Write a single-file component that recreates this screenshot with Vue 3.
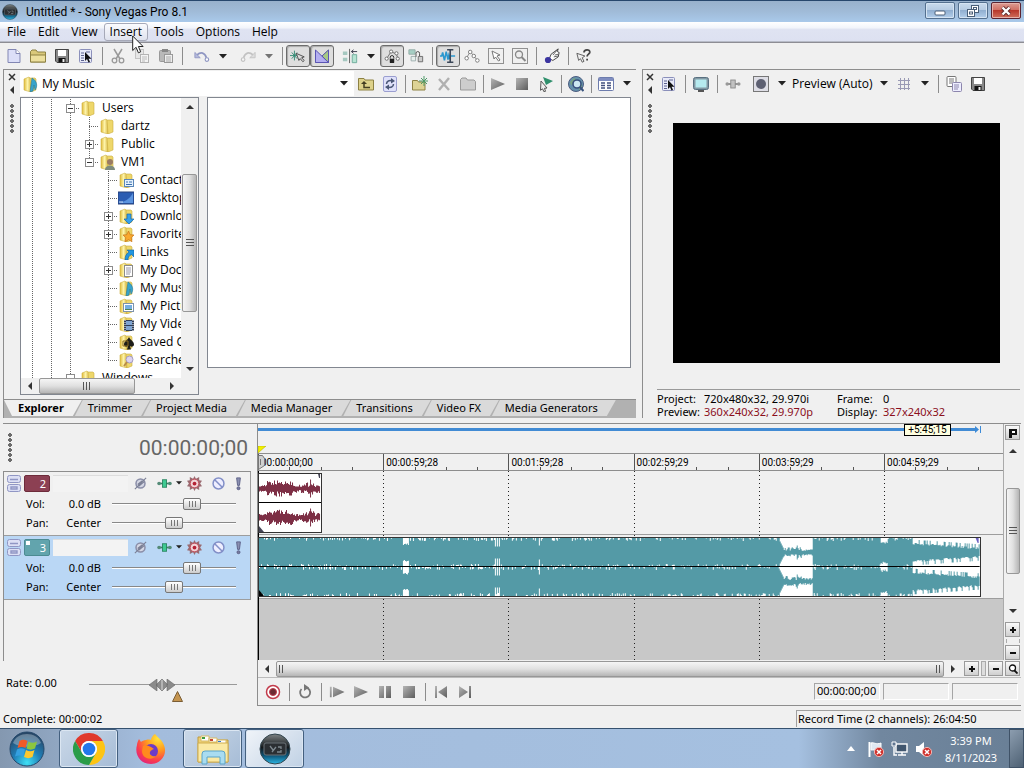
<template>
  <svg class="sprite" aria-hidden="true">
    <defs>
      <linearGradient id="gGrey" x1="0" y1="0" x2="1" y2="1">
        <stop offset="0" stop-color="#b5b5b5" /><stop offset="1" stop-color="#5d5d5d" />
      </linearGradient>
      <linearGradient id="gFolder" x1="0" x2="1">
        <stop offset="0" stop-color="#e0bb3c" /><stop offset=".5" stop-color="#fdf3a8" /><stop offset="1" stop-color="#dcbd4a" />
      </linearGradient>
      <radialGradient id="gOrb" cx=".5" cy=".9" r=".9">
        <stop offset="0" stop-color="#3fe0f5" /><stop offset=".45" stop-color="#1f7fb8" /><stop offset="1" stop-color="#29425f" />
      </radialGradient>
      <radialGradient id="gFox" cx=".75" cy=".15" r="1">
        <stop offset="0" stop-color="#ffe53c" /><stop offset=".4" stop-color="#ff9a1f" /><stop offset=".75" stop-color="#fb3b4e" /><stop offset="1" stop-color="#d8208a" />
      </radialGradient>
      <linearGradient id="gVegas" x1="0" y1="0" x2="0" y2="1">
        <stop offset="0" stop-color="#7d8385" /><stop offset=".45" stop-color="#15191c" /><stop offset=".7" stop-color="#0b4d6e" /><stop offset="1" stop-color="#2cb8e8" />
      </linearGradient>
    </defs>
    <symbol id="new" viewBox="0 0 16 16"><path d="M2 1.500h8l4 4v9H2z" fill="#dcdff8" stroke="#8287b3" /><path d="M10 1.500v4h4" fill="#fff" stroke="#8287b3" /></symbol>
    <symbol id="open" viewBox="0 0 16 16"><path d="M.5 14V3.500L2 2h4l1.500 2h8v10z" fill="#d9c87a" stroke="#8d8143" /><path d="M.5 14V7h15v7z" fill="#ecdf9d" stroke="#8d8143" /></symbol>
    <symbol id="save" viewBox="0 0 16 16"><path d="M1.500 1.500h13v13H3l-1.500-1.500z" fill="#888" stroke="#444" /><path d="M4 2h8v6H4z" fill="#fff" /><path d="M4.500 10h7v4.500h-7z" fill="#111" /><path d="M8.500 11h2v3h-2z" fill="#eee" /></symbol>
    <symbol id="props" viewBox="0 0 16 16"><rect x="1.500" y="1.500" width="12" height="13" rx="1" fill="#e8eaf8" stroke="#8b90bb" /><path d="M3 5h3M3 7.500h3M3 10h3M3 12.500h3M8 4h4" stroke="#5d638f" /><path d="M7 4v9l2-2 1.500 3.500 1.500-.8-1.500-3h3z" fill="#111" /></symbol>
    <symbol id="cut" viewBox="0 0 16 16"><path d="M4 1l6 10M12 1L6 11" stroke="#999" stroke-width="1.500" fill="none" /><circle cx="4.500" cy="12.500" r="2.300" fill="none" stroke="#999" stroke-width="1.300" /><circle cx="11.500" cy="12.500" r="2.300" fill="none" stroke="#999" stroke-width="1.300" /></symbol>
    <symbol id="copyoff" viewBox="0 0 16 16"><rect x="1.500" y="1.500" width="8" height="9" fill="#e6e6e6" stroke="#c3c3c3" /><rect x="6.500" y="6.500" width="8" height="8" fill="#f3f3f3" stroke="#b3b3b3" /><path d="M8 9h5M8 11h5M8 13h3" stroke="#bbb" /></symbol>
    <symbol id="paste" viewBox="0 0 16 16"><rect x="1.500" y="2.500" width="11" height="11" rx="1" fill="#b9b9b9" stroke="#999" /><rect x="4" y="1" width="6" height="3" fill="#888" /><rect x="6.500" y="6.500" width="8" height="8" fill="#eee" stroke="#999" /><path d="M8 9h5M8 11h5M8 13h5" stroke="#aaa" /></symbol>
    <symbol id="undo" viewBox="0 0 18 16"><path d="M3 7c5-4 9-3 11 3" fill="none" stroke="#8f96c2" stroke-width="2" /><path d="M1 4v6h6z" fill="#b4b9dc" stroke="#8f96c2" /><circle cx="14.500" cy="12" r="2" fill="#fff" stroke="#8f96c2" stroke-width="1.300" /></symbol>
    <symbol id="redo" viewBox="0 0 18 16"><path d="M15 7c-5-4-9-3-11 3" fill="none" stroke="#c2c2c2" stroke-width="2" /><path d="M17 4v6h-6z" fill="#ddd" stroke="#c2c2c2" /><circle cx="3.500" cy="12" r="2" fill="#f5f5f5" stroke="#c2c2c2" stroke-width="1.300" /></symbol>
    <symbol id="snapping" viewBox="0 0 18 16"><path d="M5 2v11M0 7.500h10M2 4l6 7M8 4l-6 7" stroke="#2f8a72" /><path d="M7 5l9 4-3 1 3 3-1.500 1.500-3-3.500-1.500 2z" fill="#ddd" stroke="#444" /></symbol>
    <symbol id="fade" viewBox="0 0 16 16"><path d="M14.500 2v12.500H1.500z" fill="#b9d77e" stroke="#6d9050" /><path d="M1.500 2v12.500h13z" fill="#b3aef0" stroke="#5b55b5" /><path d="M14.500 2v12.500L8 8z" fill="#a6c985" stroke="#5b55b5" /></symbol>
    <symbol id="ripple" viewBox="0 0 18 16"><path d="M1 3h5v4H1zM1 10h5v4H1z" fill="#a5c8c0" /><path d="M11.500 6.500h5v9h-5z" fill="#b5e3d2" stroke="#6aa898" /><path d="M8.500 0v16" stroke="#555" /><path d="M17 3H11M13 1l-2.500 2L13 5" fill="none" stroke="#334" /></symbol>
    <symbol id="lockenv" viewBox="0 0 18 16"><path d="M3 11l5-8 6 3 2 6" fill="none" stroke="#666" /><g fill="#fff" stroke="#666"><circle cx="3" cy="11" r="1.800" /><circle cx="8" cy="3" r="1.800" /><circle cx="14" cy="5" r="1.800" /><circle cx="15.500" cy="11" r="1.800" /></g><rect x="6.500" y="11" width="5" height="5" rx="1" fill="#222" /><path d="M7 11V9.500a2 2 0 014 0V11" fill="none" stroke="#222" /></symbol>
    <symbol id="group" viewBox="0 0 18 16"><path d="M1 1h7v5H1z" fill="#a6cfc4" stroke="#91aaa5" /><path d="M3.500 8.500h5v5h-5z" fill="#e6eeec" stroke="#9aa" /><path d="M11.500 8.500h5v6h-5z" fill="#ccc" stroke="#666" /><path d="M9 9V5a2 2 0 014 0v3" fill="none" stroke="#444" /></symbol>
    <symbol id="normal" viewBox="0 0 18 16"><path d="M0 8h2l1-4 2 9 2-10 2 9 1-5 1 3 1-2h5" fill="none" stroke="#2b98cf" stroke-width="1.800" /><path d="M8 1h7M8 15h7M11.500 1v14" stroke="#3a4658" stroke-width="1.800" /></symbol>
    <symbol id="envelope" viewBox="0 0 18 16"><path d="M3 10l4-7 4 5 4 5" fill="none" stroke="#888" /><g fill="#fff" stroke="#777"><circle cx="3" cy="10.500" r="2" /><circle cx="7" cy="3.500" r="2" /><circle cx="11" cy="8" r="2" /><circle cx="15" cy="13" r="2" /></g></symbol>
    <symbol id="select" viewBox="0 0 16 16"><rect x=".5" y=".5" width="15" height="15" fill="none" stroke="#333" stroke-dasharray="1 1" /><path d="M4 3l8 4-3 1 3 4-1.500 1-3-4-1.500 2z" fill="#fff" stroke="#777" /></symbol>
    <symbol id="zoomsel" viewBox="0 0 16 16"><rect x=".5" y=".5" width="15" height="15" fill="none" stroke="#333" stroke-dasharray="1 1" /><circle cx="7" cy="6.500" r="3.500" fill="#eee" stroke="#888" stroke-width="1.300" /><path d="M9.500 9l4 4" stroke="#888" stroke-width="2" /></symbol>
    <symbol id="hand" viewBox="0 0 18 18"><path d="M16 1l-8 6-2 5 4 2 6-4 1-5-2-1z" fill="#fff" stroke="#333" /><path d="M15 2l-5 6M12 8l4-1M11 10l5-1" stroke="#555" fill="none" /><circle cx="4.500" cy="13.500" r="3.500" fill="#3b35a0" /></symbol>
    <symbol id="whats" viewBox="0 0 18 16"><path d="M1 5l9 3-3 2 2 4-2 1-2-4-2 2z" fill="#eee" stroke="#555" /><path d="M9 4c0-4 7-4 6.500 0-.3 2-3 2-3 4.500M12.500 11v2" fill="none" stroke="#444" stroke-width="2" /></symbol>
    <symbol id="up" viewBox="0 0 16 16"><path d="M.5 14V2.500H6L7 4h8.500v10z" fill="#ddd18a" stroke="#8d8143" /><path d="M12 11.500H6V7" fill="none" stroke="#443e22" stroke-width="1.500" /><path d="M3 8l3-3L9 8z" fill="#443e22" /></symbol>
    <symbol id="refresh" viewBox="0 0 16 16"><rect x="1.500" y=".5" width="13" height="15" rx="1.500" fill="#dfe1fa" stroke="#9a9ed0" /><path d="M4.500 8c0-3 3-4 5.500-3M11.500 8c0 3-3 4-5.500 3" fill="none" stroke="#4b5877" stroke-width="1.500" /><path d="M9 2l4 3-4 2.500zM7 8.500L3 11l4 3z" fill="#4b5877" /></symbol>
    <symbol id="newfolder" viewBox="0 0 16 16"><path d="M.5 14V4.500h5l1 1.500H13v8z" fill="#ddd395" stroke="#8d8143" /><path d="M12 0v10M7 5h9M9 2l6 6M15 2L9 8" stroke="#4f9a68" /></symbol>
    <symbol id="delete" viewBox="0 0 16 16"><path d="M3 3l10 11M13 2L3 14" stroke="#b0b0b0" stroke-width="2.400" /></symbol>
    <symbol id="folderoff" viewBox="0 0 16 16"><path d="M.5 14V3.500L2 2h4l1.500 2H14l1.500 1.500V14z" fill="#cdcdcd" stroke="#999" /></symbol>
    <symbol id="play" viewBox="0 0 16 16"><path d="M1 2l14 6-14 6z" fill="url(#gGrey)" /></symbol>
    <symbol id="stop" viewBox="0 0 16 16"><path d="M2 2h12v12H2z" fill="url(#gGrey)" /></symbol>
    <symbol id="autoplay" viewBox="0 0 16 16"><path d="M5 1l10 4-7 4z" fill="#2f8f6c" /><path d="M3 5l6 7-2.500.3 1 3-1.500.5-1.500-3-2 1.500z" fill="#eee" stroke="#555" /></symbol>
    <symbol id="globe" viewBox="0 0 16 16"><circle cx="8" cy="8" r="7.500" fill="#6592ab" stroke="#4c5c80" /><path d="M2 6l4-4 3 2-3 4-3 1zM11 10l3-2v4l-3 2z" fill="#79a383" /><circle cx="9" cy="8" r="4" fill="#cbe8f1" stroke="#38527d" stroke-width="1.600" /><path d="M12 11l3.500 4" stroke="#38527d" stroke-width="2.200" /></symbol>
    <symbol id="views" viewBox="0 0 16 16"><rect x=".5" y="1.500" width="15" height="13" rx="1" fill="#fff" stroke="#6d7cad" /><path d="M1 2h14v3H1z" fill="#7f8dc0" /><path d="M3 7h4M3 9.500h4M3 12h4M9 7h4M9 9.500h4M9 12h4" stroke="#44517f" stroke-width="1.300" /></symbol>
    <symbol id="monitor" viewBox="0 0 16 16"><rect x=".5" y="1.500" width="15" height="12" rx="2" fill="#8399a5" stroke="#587080" /><rect x="2.500" y="3.500" width="11" height="8" fill="#b5ebf0" /><path d="M5 15h6" stroke="#555" stroke-width="2" /></symbol>
    <symbol id="fxoff" viewBox="0 0 18 16"><path d="M2 8h14" stroke="#888" stroke-width="2" /><circle cx="2.500" cy="8" r="2" fill="#999" /><circle cx="15.500" cy="8" r="2" fill="#999" /><rect x="6.500" y="3.500" width="5" height="9" fill="#c2c2c2" stroke="#888" /></symbol>
    <symbol id="fx" viewBox="0 0 18 16"><path d="M2 8h14" stroke="#3d8167" stroke-width="2" /><circle cx="2.500" cy="8" r="2.200" fill="#548b77" /><circle cx="15.500" cy="8" r="2.200" fill="#548b77" /><rect x="6.500" y="3.500" width="5" height="9" fill="#3fca92" stroke="#26805b" /></symbol>
    <symbol id="split" viewBox="0 0 16 16"><rect x=".5" y=".5" width="15" height="15" fill="#dedee6" stroke="#777" /><circle cx="8" cy="8" r="5" fill="#5d6072" /></symbol>
    <symbol id="grid" viewBox="0 0 16 16"><path d="M4.500 2v12M8.500 2v12M12.500 2v12M2 4.500h12M2 8.500h12M2 12.500h12" stroke="#9a9ab5" /></symbol>
    <symbol id="copy" viewBox="0 0 16 16"><rect x="1" y=".5" width="9" height="10" rx="1" fill="#fff" stroke="#777" /><path d="M3 3h5M3 5h5M3 7h4" stroke="#777" /><rect x="6.500" y="6.500" width="9" height="9" rx="1" fill="#eef" stroke="#8d86ad" /><path d="M8 9h5M8 11h5M8 13h4" stroke="#8d86ad" /></symbol>
    <symbol id="caret" viewBox="0 0 8 5"><path d="M0 0h8L4 4.500z" fill="#222" /></symbol>
    <symbol id="phase" viewBox="0 0 16 16"><circle cx="8" cy="8" r="4.800" fill="#d5d7e4" stroke="#8a8ea8" stroke-width="1.600" /><path d="M2 14L14 2M5 9l5-4M6 11l6-5" stroke="#7c8096" stroke-width="1.200" /></symbol>
    <symbol id="gear" viewBox="0 0 16 16"><path d="M8 0l1.500 3L13 1v3.500l3 .5-2 3 2 3-3 .5V15l-3.500-2L8 16l-1.500-3L3 15v-3.500L0 11l2-3-2-3 3-.5V1l3.500 2z" fill="#9a6a70" /><circle cx="8" cy="8" r="4.600" fill="#f1d5d8" stroke="#c24a58" /><circle cx="8" cy="8" r="2" fill="#b52234" /></symbol>
    <symbol id="mute" viewBox="0 0 16 16"><circle cx="8" cy="8" r="5.800" fill="#eef" stroke="#8390c8" stroke-width="1.600" /><path d="M4 4l8 8" stroke="#8390c8" stroke-width="1.600" /></symbol>
    <symbol id="solo" viewBox="0 0 8 16"><path d="M2 2h4L5 10H3z" fill="#8a8fb0" stroke="#5c6088" /><circle cx="4" cy="13" r="1.600" fill="#777ca0" stroke="#5c6088" /></symbol>
    <symbol id="strip" viewBox="0 0 14 17"><g fill="#dcdff4" stroke="#9096c4"><rect x=".5" y=".5" width="13" height="7" rx="2" /><rect x=".5" y="9.500" width="13" height="7" rx="2" /></g><path d="M3 4.500h8M4 12h6v2H4z" fill="none" stroke="#9096c4" stroke-width="1.400" /></symbol>
    <symbol id="record" viewBox="0 0 16 16"><circle cx="8" cy="8" r="6.500" fill="#fff" stroke="#c23b4b" stroke-width="1.500" /><circle cx="8" cy="8" r="3.500" fill="#6d2b33" stroke="#c23b4b" /></symbol>
    <symbol id="loop" viewBox="0 0 16 16"><path d="M9 3.500A5 5 0 1 1 4.500 5" fill="none" stroke="#777" stroke-width="1.800" /><path d="M7 0l5 3.500L7 7z" fill="#777" /></symbol>
    <symbol id="playstart" viewBox="0 0 18 16"><path d="M1 2h2v12H1zM4.500 2l13 6-13 6z" fill="url(#gGrey)" /></symbol>
    <symbol id="pause" viewBox="0 0 16 16"><path d="M2 2h5v12H2zM9 2h5v12H9z" fill="url(#gGrey)" /></symbol>
    <symbol id="prev" viewBox="0 0 16 16"><path d="M2 2h2v12H2zM14 2v12L5 8z" fill="url(#gGrey)" /></symbol>
    <symbol id="next" viewBox="0 0 16 16"><path d="M12 2h2v12h-2zM2 2v12l9-6z" fill="url(#gGrey)" /></symbol>
    <symbol id="folder" viewBox="0 0 16 16"><path d="M2 3l5-2 2 2v13l-7-2z" fill="url(#gFolder)" stroke="#cdb040" stroke-width=".6" /><path d="M8 2h5l1 1v11l-5 2z" fill="#eed76a" stroke="#c9ac42" stroke-width=".6" /></symbol>
    <symbol id="b-user" viewBox="0 0 16 16"><circle cx="11" cy="8" r="3" fill="#9a7b64" /><path d="M6 16c0-6 10-6 10 0z" fill="#7d8b7e" /></symbol>
    <symbol id="b-card" viewBox="0 0 16 16"><rect x="6.500" y="7.500" width="9" height="7" fill="#e5f1fc" stroke="#5b87b8" /><path d="M8 10h2M11 10h3M8 12.500h6" stroke="#3a70b0" /></symbol>
    <symbol id="b-down" viewBox="0 0 16 16"><path d="M9 6h4v5h3l-5 5-5-5h3z" fill="#37a0e8" stroke="#1769ac" stroke-width=".7" /></symbol>
    <symbol id="b-star" viewBox="0 0 16 16"><path d="M10.500 5l1.700 3.700 3.800.3-2.800 2.700.8 4-3.500-2-3.500 2 .8-4L5 9l3.800-.3z" fill="#f9a92e" stroke="#c9721a" stroke-width=".7" /></symbol>
    <symbol id="b-link" viewBox="0 0 16 16"><path d="M16 6v7l-2.500-2.500C11 12 10 13 10 16H7c0-4 1-6 4-8L9 6z" fill="#2196e0" stroke="#125e9c" stroke-width=".6" /></symbol>
    <symbol id="b-doc" viewBox="0 0 16 16"><rect x="6.500" y="3.500" width="8" height="11" fill="#fff" stroke="#8b8b8b" /><path d="M8 6h5M8 8h5M8 10h5M8 12h4" stroke="#99a" /></symbol>
    <symbol id="b-music" viewBox="0 0 16 16"><path d="M10 2c5 3 6 8 3 12l-1-5-1 6-3 1z" fill="#37a3cb" stroke="#23799b" stroke-width=".6" /></symbol>
    <symbol id="b-pic" viewBox="0 0 16 16"><rect x="5.500" y="5.500" width="10" height="8" fill="#fff" stroke="#7e93aa" /><path d="M7 7h7v5H7z" fill="#75aee0" /><path d="M7 11h7v1H7z" fill="#4e8355" /></symbol>
    <symbol id="b-film" viewBox="0 0 16 16"><path d="M6 4h10v11H6z" fill="#2f3d55" /><path d="M8 5h6v4H8zM8 10h6v4H8z" fill="#7ea4d2" /><path d="M7 4v11M15 4v11" stroke="#fff" stroke-dasharray="1 1" /></symbol>
    <symbol id="b-spade" viewBox="0 0 16 16"><path d="M11 3c1 3 5 4 5 7.500 0 2-2.500 3-4 1.500l1 3.500H9l1-3.500c-1.500 1.500-4 .5-4-1.500C6 7 10 6 11 3z" fill="#1d1d18" /><path d="M5 7h5v5H5z" fill="none" stroke="#8b6b1e" /></symbol>
    <symbol id="b-search" viewBox="0 0 16 16"><circle cx="11.500" cy="7.500" r="3.500" fill="#dcd3f0" stroke="#a39bc0" /><path d="M9 10l-3 4" stroke="#b98d4a" stroke-width="2" /></symbol>
    <symbol id="desktop" viewBox="0 0 16 16"><path d="M0 2h16v12H0z" fill="#2b5cb2" stroke="#26417a" /><path d="M1 13C6 12 12 9 15 3v10z" fill="#5a93df" /><path d="M1 12h4" stroke="#cfe6ff" /></symbol>
    <symbol id="vegas" viewBox="0 0 32 32"><circle cx="16" cy="16" r="15" fill="url(#gVegas)" stroke="#32454e" /><rect x="5" y="10" width="22" height="12" rx="2" fill="#2b2f33" stroke="#6a7378" /><path d="M11 13l3 4M13 19l4-5M19 14h3v2M18 19h4v-2" fill="none" stroke="#7d888f" stroke-width="1.300" /></symbol>
    <symbol id="orb" viewBox="0 0 36 36"><circle cx="18" cy="18" r="17" fill="url(#gOrb)" stroke="#24486b" /><path d="M4 12C8 0 28 0 32 12 24 17 12 17 4 12z" fill="#fff" opacity=".3" /><path d="M10.500 10c3-2 5.500-1.500 8 0l-2 7c-2.500-1.500-5-1.500-8 0z" fill="#ef5b28" /><path d="M19.500 10.500c3 1.800 5.500 1.500 8.500 0l-2 7c-3 1.500-5.500 1.500-8.500 0z" fill="#8cc63f" /><path d="M8 18.500c3-1.700 5.500-1.500 8 0l-2 7c-2.500-1.500-5-1.500-8 0z" fill="#35a0e0" /><path d="M17 19c3 1.700 5.500 1.500 8.500 0l-2 7c-3 1.500-5.500 1.500-8.500 0z" fill="#fcc82e" /></symbol>
    <symbol id="chrome" viewBox="0 0 32 32"><path d="M2.140 8A16 16 0 0 1 29.860 8L16 8A8 8 0 0 0 9.070 20z" fill="#e0392c" /><path d="M29.860 8A16 16 0 0 1 16 32L22.930 20A8 8 0 0 0 16 8z" fill="#fdc413" /><path d="M16 32A16 16 0 0 1 2.140 8L9.070 20A8 8 0 0 0 22.930 20z" fill="#2a9c48" /><circle cx="16" cy="16" r="8" fill="#fff" /><circle cx="16" cy="16" r="6.300" fill="#2377ea" /></symbol>
    <symbol id="firefox" viewBox="0 0 32 32"><path d="M20 1c2 3 6 5 8 9 6 11-2 21-12 21S-1 22 2 12c0-2 1-4 2-6l2 3c1-1 3-2 5-2 3-1 5 0 5 0 0-2 2-5 4-6z" fill="url(#gFox)" /><circle cx="16" cy="18" r="7" fill="#6d3bc8" /><path d="M8 13c3-2 6 0 8 1l3 2c-2 1-3 1-4 3-1 3 3 5 6 4-4 5-14 3-14-5z" fill="#ff8a1e" /></symbol>
    <symbol id="files" viewBox="0 0 32 32"><path d="M1 4h10l2 3h18v22H1z" fill="#edcf72" stroke="#c19c3c" /><path d="M4 3h8v5H4zM12 5h8v4h-8zM20 7h9v4h-9z" fill="#fff" stroke="#d8bb66" /><path d="M5 4h3v2H5z" fill="#3e9b3e" /><path d="M13 6h3v2h-3z" fill="#c8452c" /><path d="M21 8h3v1h-3z" fill="#3577c4" /><path d="M1 10h30v19H1z" fill="#fbe9a3" stroke="#d0ae51" /><path d="M5 31V21q0-3 3-3h17q3 0 3 3v10h-5v-7H10v7z" fill="#a9dcf0" stroke="#5aa4c9" /></symbol>
    <symbol id="flag" viewBox="0 0 18 16"><path d="M2.500 1v15" stroke="#fff" stroke-width="2" /><path d="M4 2c3-1 5 2 10 0v7c-5 2-7-1-10 0z" fill="#dfe8f2" stroke="#fff" /><circle cx="12" cy="11" r="4.600" fill="#d0302b" stroke="#f2b6b2" /><path d="M10 9l4 4M14 9l-4 4" stroke="#fff" stroke-width="1.500" /></symbol>
    <symbol id="net" viewBox="0 0 18 16"><rect x="5" y="3" width="11" height="8" fill="#40566e" stroke="#fff" stroke-width="1.400" /><path d="M7 14h8M11 11v3M3 6v8h3" fill="none" stroke="#fff" stroke-width="1.400" /><path d="M1 1h4v4H1z" fill="#5f7590" stroke="#fff" /></symbol>
    <symbol id="sound" viewBox="0 0 18 16"><path d="M1 5h3l5-4v14l-5-4H1z" fill="#fff" /><circle cx="12" cy="11" r="4.600" fill="#d0302b" stroke="#f2b6b2" /><path d="M10 9l4 4M14 9l-4 4" stroke="#fff" stroke-width="1.500" /></symbol>
    <symbol id="mag" viewBox="0 0 10 10"><circle cx="4.500" cy="4" r="3" fill="#fff" stroke="#111" stroke-width="1.300" /><path d="M6.500 6.500L9.500 9.500" stroke="#111" stroke-width="1.800" /></symbol>
  </svg>

  <div class="app">
    <header class="titlebar">
      <svg class="i16"><use href="#vegas" /></svg>
      <h1>Untitled * - Sony Vegas Pro 8.1</h1>
      <div class="winbtns">
        <button aria-label="Minimize"><svg viewBox="0 0 14 12"><rect x="2" y="6" width="10" height="4" rx="1" fill="#fff" stroke="#4a5f78" /></svg></button>
        <button aria-label="Restore"><svg viewBox="0 0 14 12"><g fill="#fff" stroke="#4a5f78"><rect x="5.500" y=".5" width="7" height="7" /><rect x="7.500" y="2.500" width="3" height="2" /><rect x="1.500" y="4.500" width="7" height="7" /><rect x="3.500" y="7" width="3" height="2" /></g></svg></button>
        <button class="close" aria-label="Close"><svg viewBox="0 0 14 12"><path d="M3.500 2.500l7 7M10.500 2.500l-7 7" stroke="#5a2a2a" stroke-width="4" /><path d="M3.500 2.500l7 7M10.500 2.500l-7 7" stroke="#fff" stroke-width="2.400" /></svg></button>
      </div>
    </header>

    <nav class="menubar">
      <button v-for="m in menus" :key="m" :class="{ hot: m === 'Insert' }">
        {{ m }}
        <svg v-if="m === 'Insert'" class="pointer" viewBox="0 0 12 19"><path d="M.7 1v14.500l3.400-3.200 2.300 5.500 2.300-1-2.300-5.300h4.700z" fill="#fff" stroke="#222" /></svg>
      </button>
    </nav>

    <div class="toolbar">
      <template v-for="(t, i) in mainTools" :key="i">
        <i v-if="t === '|'" class="sep"></i>
        <span v-else-if="t.split" class="splitbtn">
          <button class="tool" :aria-label="t.n"><svg class="i16"><use :href="'#' + t.n" /></svg></button>
          <button class="drop" :class="{ off: t.off }" aria-label="More"><svg><use href="#caret" /></svg></button>
        </span>
        <button v-else class="tool" :class="{ on: t.on }" :aria-label="t.n"><svg class="i16"><use :href="'#' + t.n" /></svg></button>
      </template>
    </div>

    <main class="docks">
      <section class="dock">
        <div class="grip">
          <button aria-label="Close panel"><svg viewBox="0 0 8 8"><path d="M1 1l6 6M7 1L1 7" stroke="#333" stroke-width="1.500" /></svg></button>
          <button aria-label="Collapse panel"><svg viewBox="0 0 8 8"><path d="M6 0v8L2 4z" fill="#333" /></svg></button>
          <i class="dots"></i>
        </div>
        <div class="explorer">
          <div class="bar narrow">
            <div class="path">
              <svg class="i16"><use href="#folder" /></svg>
              <svg class="i16 badge"><use href="#b-music" /></svg>
              <select aria-label="Folder"><option>My Music</option></select>
              <svg class="arrow"><use href="#caret" /></svg>
            </div>
            <template v-for="(t, i) in explorerTools" :key="i">
              <i v-if="t === '|'" class="sep"></i>
              <button v-else class="tool" :aria-label="t"><svg class="i16"><use :href="'#' + t" /></svg></button>
            </template>
            <button class="drop" aria-label="View options"><svg><use href="#caret" /></svg></button>
          </div>
          <div class="panes">
            <div class="tree">
              <div class="treebody">
                <ul>
                  <li v-for="r in rows" :key="r.name">
                    <i v-for="n in 3" :key="n" class="guide" :class="{ hide: n > r.depth }"></i>
                    <i v-if="r.depth === 4" class="guide blank"></i>
                    <i class="node" :class="{ last: r.last }">
                      <svg v-if="r.box" class="box" viewBox="0 0 9 9"><rect x=".5" y=".5" width="8" height="8" fill="#fff" stroke="#8c8c8c" /><path :d="r.box === '+' ? 'M2 4.500h5M4.500 2v5' : 'M2 4.500h5'" stroke="#333" /></svg>
                    </i>
                    <span class="ficon">
                      <svg class="i16"><use :href="r.name === 'Desktop' ? '#desktop' : '#folder'" /></svg>
                      <svg v-if="r.badge" class="i16 badge"><use :href="'#b-' + r.badge" /></svg>
                    </span>
                    <span>{{ r.name }}</span>
                  </li>
                </ul>
                <div class="vscroll">
                  <button aria-label="Scroll up"><svg viewBox="0 0 8 4"><path d="M0 4h8L4 0z" fill="#333" /></svg></button>
                  <div class="thumb"><i></i></div>
                  <button aria-label="Scroll down"><svg viewBox="0 0 8 4"><path d="M0 0h8L4 4z" fill="#333" /></svg></button>
                </div>
              </div>
              <div class="hscroll">
                <button aria-label="Scroll left"><svg viewBox="0 0 4 8"><path d="M4 0v8L0 4z" fill="#333" /></svg></button>
                <div class="thumb"><i></i></div>
                <button aria-label="Scroll right"><svg viewBox="0 0 4 8"><path d="M0 0v8l4-4z" fill="#333" /></svg></button>
              </div>
            </div>
            <div class="files"></div>
          </div>
        </div>
        <div class="tabs">
          <button v-for="t in tabs" :key="t" :class="{ active: t === 'Explorer' }">{{ t }}</button>
        </div>
      </section>

      <section class="dock preview">
        <div class="grip">
          <button aria-label="Close panel"><svg viewBox="0 0 8 8"><path d="M1 1l6 6M7 1L1 7" stroke="#333" stroke-width="1.500" /></svg></button>
          <button aria-label="Collapse panel"><svg viewBox="0 0 8 8"><path d="M6 0v8L2 4z" fill="#333" /></svg></button>
          <i class="dots"></i>
        </div>
        <div class="screen">
          <div class="bar">
            <button class="tool" aria-label="Project properties"><svg class="i16"><use href="#props" /></svg></button>
            <i class="sep"></i>
            <button class="tool" aria-label="External monitor"><svg class="i16"><use href="#monitor" /></svg></button>
            <i class="sep"></i>
            <button class="tool" aria-label="Video output FX"><svg class="i16"><use href="#fxoff" /></svg></button>
            <span class="splitbtn">
              <button class="tool" aria-label="Split screen"><svg class="i16"><use href="#split" /></svg></button>
              <button class="drop" aria-label="Split options"><svg><use href="#caret" /></svg></button>
            </span>
            <button class="quality">Preview (Auto)<svg><use href="#caret" /></svg></button>
            <button class="tool" aria-label="Overlays"><svg class="i16"><use href="#grid" /></svg></button>
            <button class="drop" aria-label="Overlay options"><svg><use href="#caret" /></svg></button>
            <i class="sep"></i>
            <button class="tool" aria-label="Copy snapshot"><svg class="i16"><use href="#copy" /></svg></button>
            <button class="tool" aria-label="Save snapshot"><svg class="i16"><use href="#save" /></svg></button>
          </div>
          <div class="stage"><div class="video"></div></div>
          <dl class="info">
            <dt>Project:</dt><dd>720x480x32, 29.970i</dd><dt>Frame:</dt><dd>0</dd>
            <dt>Preview:</dt><dd class="red">360x240x32, 29.970p</dd><dt>Display:</dt><dd class="red">327x240x32</dd>
          </dl>
        </div>
      </section>
    </main>

    <section class="timeline">
      <div class="left">
        <div class="clockbar"><i class="dots"></i><output>00:00:00;00</output></div>
        <div class="tracks">
          <div v-for="t in tracks" :key="t.id" class="track" :class="{ sel: t.id === 3 }">
            <div class="top">
              <svg class="strip"><use href="#strip" /></svg>
              <b class="num" :class="'n' + t.id">{{ t.id }}</b>
              <input type="text" :aria-label="'Name of track ' + t.id">
              <button class="tool" aria-label="Invert phase"><svg class="i16"><use href="#phase" /></svg></button>
              <button class="tool" aria-label="Track FX"><svg class="i16"><use href="#fx" /></svg></button>
              <svg class="tiny"><use href="#caret" /></svg>
              <button class="tool" aria-label="Automation"><svg class="i16"><use href="#gear" /></svg></button>
              <button class="tool" aria-label="Mute"><svg class="i16"><use href="#mute" /></svg></button>
              <button class="tool slim" aria-label="Solo"><svg class="i16"><use href="#solo" /></svg></button>
            </div>
            <div class="level">
              <label :for="'vol' + t.id">Vol:</label><span>0.0 dB</span>
              <input :id="'vol' + t.id" v-model="t.vol" type="range" min="0" max="100">
            </div>
            <div class="level">
              <label :for="'pan' + t.id">Pan:</label><span>Center</span>
              <input :id="'pan' + t.id" v-model="t.pan" type="range" min="0" max="100">
            </div>
          </div>
        </div>
        <div class="rate">
          <label for="rate">Rate: 0.00</label>
          <div class="shuttle">
            <input id="rate" type="range">
            <svg class="knob" viewBox="0 0 26 12"><path d="M8 0v12L0 6zM18 0v12l8-6zM13 0l6 6-6 6-6-6z" fill="#8b8b8b" stroke="#666" stroke-width=".6" /><path d="M13 1v10" stroke="#ddd" /></svg>
            <svg class="mark" viewBox="0 0 11 11"><path d="M5.500.5l5 10H.5z" fill="#c5954f" stroke="#7a5d35" /></svg>
          </div>
        </div>
      </div>

      <div class="right">
        <div class="body">
          <div class="lanes">
            <div class="loopbar">
              <div class="line">
                <span>+5:45;15</span>
                <svg viewBox="0 0 6 7"><path d="M0 0v7l4-3.500zM5 0h1v7H5z" fill="#3d8bd8" /></svg>
              </div>
              <svg class="flagmark" viewBox="0 0 8 7"><path d="M0 0h8L0 7z" fill="#f2f000" stroke="#a5a500" stroke-width=".5" /></svg>
            </div>
            <div class="ruler">
              <div v-for="l in marks" :key="l" class="seg"><span>{{ l }}</span><i></i><i></i><i></i></div>
              <svg class="playhead" viewBox="0 0 7 15"><path d="M.5.5h4l2 3v7l-6 4z" fill="#d0d0d0" stroke="#777" /><path d="M2.500 4v6" stroke="#777" /></svg>
            </div>
            <div class="canvas">
              <div class="gridlines"><i v-for="l in marks" :key="l"></i></div>
              <div class="lane">
                <div class="clip short">
                  <svg viewBox="0 0 62 58" preserveAspectRatio="none"><path :d="shortWave" fill="#7d2f45" /><path d="M0 28.500h62" stroke="#000" /><path d="M0 52v6h5zM59 0h2v4h-1z" fill="#445" /></svg>
                </div>
              </div>
              <div class="lane">
                <div class="clip long">
                  <svg viewBox="0 0 721 58" preserveAspectRatio="none"><path :d="longWave" fill="#549aa6" /><path d="M0 28.500h721" stroke="#000" /><path d="M0 52v6h5z" fill="#000" /><path d="M717 0h3v5h-1z" fill="#6a5fc0" /></svg>
                </div>
              </div>
            </div>
          </div>
          <div class="side">
            <button class="mini" aria-label="Marker tool"><svg viewBox="0 0 10 10"><path d="M1 1h8v6H4v3H1z" fill="#111" /><path d="M4 3h3v2H4z" fill="#fff" /></svg></button>
            <div class="vscroll">
              <button aria-label="Scroll up"><svg viewBox="0 0 8 4"><path d="M0 4h8L4 0z" fill="#333" /></svg></button>
              <div class="thumb"><i></i></div>
              <button aria-label="Scroll down"><svg viewBox="0 0 8 4"><path d="M0 0h8L4 4z" fill="#333" /></svg></button>
            </div>
            <button class="mini" aria-label="Zoom in height"><svg viewBox="0 0 10 10"><path d="M5 2v6M2 5h6" stroke="#111" stroke-width="2" /></svg></button>
            <i class="bit"></i>
            <button class="mini" aria-label="Zoom out height"><svg viewBox="0 0 10 10"><path d="M2 5h6" stroke="#111" stroke-width="2" /></svg></button>
          </div>
        </div>
        <div class="zoomrow">
          <div class="hscroll">
            <button aria-label="Scroll left"><svg viewBox="0 0 4 8"><path d="M4 0v8L0 4z" fill="#333" /></svg></button>
            <div class="thumb"><i></i><i></i></div>
            <button aria-label="Scroll right"><svg viewBox="0 0 4 8"><path d="M0 0v8l4-4z" fill="#333" /></svg></button>
          </div>
          <button class="mini" aria-label="Zoom in time"><svg viewBox="0 0 10 10"><path d="M5 2v6M2 5h6" stroke="#111" stroke-width="2" /></svg></button>
          <i class="bit"></i>
          <button class="mini" aria-label="Zoom out time"><svg viewBox="0 0 10 10"><path d="M2 5h6" stroke="#111" stroke-width="2" /></svg></button>
          <button class="mini" aria-label="Zoom tool"><svg><use href="#mag" /></svg></button>
        </div>
        <div class="transport">
          <template v-for="(t, i) in transport" :key="i">
            <i v-if="t === '|'" class="sep"></i>
            <button v-else class="tool" :aria-label="t"><svg class="i16"><use :href="'#' + t" /></svg></button>
          </template>
          <div class="times"><output>00:00:00;00</output><output></output><output></output></div>
        </div>
      </div>
    </section>

    <div class="status">
      <span>Complete: 00:00:02</span>
      <span class="rec">Record Time (2 channels): 26:04:50</span>
    </div>

    <footer class="taskbar">
      <button class="start" aria-label="Start"><svg><use href="#orb" /></svg></button>
      <button class="app-btn open" aria-label="Chrome"><svg><use href="#chrome" /></svg></button>
      <button class="app-btn" aria-label="Firefox"><svg><use href="#firefox" /></svg></button>
      <button class="app-btn open" aria-label="Windows Explorer"><svg><use href="#files" /></svg></button>
      <button class="app-btn open now" aria-label="Vegas Pro"><svg><use href="#vegas" /></svg></button>
      <div class="tray">
        <svg class="chev" viewBox="0 0 8 5"><path d="M0 5h8L4 0z" fill="#fff" /></svg>
        <svg><use href="#flag" /></svg>
        <svg><use href="#net" /></svg>
        <svg><use href="#sound" /></svg>
      </div>
      <div class="clock"><span>3:39 PM</span><span>8/11/2023</span></div>
      <button class="peek" aria-label="Show desktop"></button>
    </footer>
  </div>
</template>

<script setup>
import { reactive } from 'vue'

const menus = ['File', 'Edit', 'View', 'Insert', 'Tools', 'Options', 'Help']

const mainTools = [
  { n: 'new' }, { n: 'open' }, { n: 'save' }, { n: 'props' }, '|',
  { n: 'cut' }, { n: 'copyoff' }, { n: 'paste' }, '|',
  { n: 'undo', split: true }, { n: 'redo', split: true, off: true }, '|',
  { n: 'snapping', on: true }, { n: 'fade', on: true }, { n: 'ripple', split: true },
  { n: 'lockenv', on: true }, { n: 'group' }, '|',
  { n: 'normal', on: true }, { n: 'envelope' }, { n: 'select' }, { n: 'zoomsel' }, '|',
  { n: 'hand' }, '|', { n: 'whats' }
]

const explorerTools = ['up', 'refresh', '|', 'newfolder', 'delete', 'folderoff', '|', 'play', 'stop', 'autoplay', '|', 'globe', '|', 'views']
const transport = ['record', '|', 'loop', '|', 'playstart', 'play', 'pause', 'stop', '|', 'prev', 'next']
const tabs = ['Explorer', 'Trimmer', 'Project Media', 'Media Manager', 'Transitions', 'Video FX', 'Media Generators']
const marks = ['00:00:00;00', '00:00:59;28', '00:01:59;28', '00:02:59;29', '00:03:59;29', '00:04:59;29']

const rows = [
  { name: 'Users', depth: 2, box: '-' },
  { name: 'dartz', depth: 3 },
  { name: 'Public', depth: 3, box: '+' },
  { name: 'VM1', depth: 3, box: '-', badge: 'user', last: true },
  { name: 'Contacts', depth: 4, badge: 'card' },
  { name: 'Desktop', depth: 4 },
  { name: 'Downloads', depth: 4, box: '+', badge: 'down' },
  { name: 'Favorites', depth: 4, box: '+', badge: 'star' },
  { name: 'Links', depth: 4, badge: 'link' },
  { name: 'My Documents', depth: 4, box: '+', badge: 'doc' },
  { name: 'My Music', depth: 4, badge: 'music' },
  { name: 'My Pictures', depth: 4, badge: 'pic' },
  { name: 'My Videos', depth: 4, badge: 'film' },
  { name: 'Saved Games', depth: 4, badge: 'spade' },
  { name: 'Searches', depth: 4, badge: 'search', last: true },
  { name: 'Windows', depth: 2, box: '-' }
]

const tracks = reactive([
  { id: 2, vol: 67, pan: 50 },
  { id: 3, vol: 67, pan: 50 }
])

// repeatable noise, so the waveform is the same on every load
const noise = (n) => {
  const s = Math.sin(n * 12.9898) * 43758.5453
  return s - Math.floor(s)
}

// one bar per pixel column, for both channels
const wave = (width, amp) => {
  let d = ''
  for (let x = 0; x < width; x++) {
    for (const c of [0, 1]) {
      const mid = c ? 43.5 : 14.5
      const up = amp(x, x * 2 + c)
      const down = amp(x, x * 3 + c + 500)
      d += `M${x} ${(mid - up).toFixed(1)}h1V${(mid + down).toFixed(1)}h-1z`
    }
  }
  return d
}

const shortWave = wave(61, (x, n) => {
  if (x === 51) return 9
  if (x < 8) return 2 + noise(n) * 1.5
  if (x < 34) return 3 + noise(n) * 5
  return 1.5 + noise(n) * (x > 46 && x < 56 ? 5 : 3)
})

const longWave = wave(721, (x, n) => {
  if (x > 143 && x < 150) return 7 + noise(n) * 2
  if (x === 236 || x === 238 || x === 240) return 6
  if (x === 280) return 7
  if (x > 520 && x < 554) {
    if (x < 525) return 11 - (x - 521) * 2
    return x === 538 ? 7 : 1.5 + noise(n) * (x < 543 ? 4 : 2)
  }
  if (x > 621 && x < 629) return 9 + noise(n) * 3
  if (x > 653) {
    const base = Math.max(4, 9 - (x - 653) / 14)
    return noise(n) > 0.75 ? base + 4 : base + noise(n + 3) * 2 - 1
  }
  return noise(n) > 0.66 ? 14.5 - noise(n + 7) * 3 : 14.5
})
</script>

<style>
body {
  margin: 0;
  background: #f0f0f0;
}
</style>

<style scoped>
* {
  box-sizing: border-box;
}

.app {
  display: flex;
  flex-direction: column;
  height: 100vh;
  overflow: hidden;
  background: #f0f0f0;
  color: #000;
  font: 11px/14px "Noto Sans", "Open Sans", sans-serif;
}

.sprite {
  position: absolute;
  width: 0;
  height: 0;
}

button {
  display: flex;
  align-items: center;
  justify-content: center;
  margin: 0;
  padding: 0;
  border: 0;
  background: none;
  color: inherit;
  font: inherit;
}

.i16 {
  width: 16px;
  height: 16px;
  flex: none;
}

.titlebar {
  display: flex;
  flex: none;
  height: 22px;
  padding: 0 3px 0 2px;
  gap: 8px;
  align-items: center;
  border-top: 1px solid #27476d;
  background: linear-gradient(#98b1cc, #a0bbd8 50%, #a9c9ea);
}

.titlebar h1 {
  flex: 1;
  margin: 0;
  font: 12px/16px Roboto, "Noto Sans", sans-serif;
}

.winbtns {
  display: flex;
  align-self: flex-start;
  gap: 3px;
  padding-top: 1px;
}

.winbtns button {
  width: 30px;
  height: 17px;
  border: 1px solid #54708f;
  border-radius: 2px;
  background: linear-gradient(#c9dbed, #b4cae2 50%, #91afd0 50%, #b3cfeb);
  box-shadow: inset 0 0 0 1px #d5e4f3;
}

.winbtns svg {
  width: 14px;
  height: 12px;
}

.winbtns .close {
  border-color: #5b2330;
  background: linear-gradient(#dc9c93, #cf6b5f 50%, #b8382b 50%, #d0705d);
  box-shadow: inset 0 0 0 1px #e6b2aa;
}

.menubar {
  display: flex;
  flex: none;
  height: 20px;
  padding: 1px 1px 0;
  border-bottom: 1px solid #b8bcc8;
  background: linear-gradient(#fff, #f2f5fb 30%, #dfe3f2 40%, #dde1f1);
  font: 12px/16px "Open Sans", "Noto Sans", sans-serif;
}

.menubar button {
  position: relative;
  padding: 0 5px;
  border: 1px solid transparent;
  border-radius: 3px;
}

.menubar .hot {
  border-color: #a6a9b8;
  background: linear-gradient(#fafbfe, #dfe2ee);
}

.pointer {
  position: absolute;
  z-index: 5;
  left: 27px;
  top: 11px;
  width: 12px;
  height: 19px;
}

.toolbar,
.bar,
.transport {
  display: flex;
  flex: none;
  align-items: center;
}

.toolbar {
  height: 27px;
  padding: 0 2px;
  border-top: 1px solid #8d8d94;
}

.tool {
  flex: none;
  width: 24px;
  height: 22px;
}

.tool.on {
  border: 1px solid #6c6c6c;
  border-radius: 3px;
  background: #dedede;
  box-shadow: inset 1px 1px 1px #aaa;
}

.sep {
  flex: none;
  width: 1px;
  height: 18px;
  margin: 0 3px 0 4px;
  background: #8c8c8c;
}

.narrow .sep {
  margin: 0 2px 0 3px;
}

.splitbtn {
  display: flex;
  flex: none;
  margin-left: 4px;
}

.drop {
  flex: none;
  width: 18px;
}

.drop.off {
  opacity: .6;
}

.drop svg,
.quality svg,
.path .arrow {
  width: 8px;
  height: 5px;
}

.docks {
  display: grid;
  flex: none;
  grid-template-columns: 633fr 378fr;
  gap: 6px;
  padding: 0 4px 5px 3px;
}

.dock {
  display: grid;
  grid-template-columns: 16px minmax(0, 1fr);
  align-content: space-between;
  min-width: 0;
  border-top: 1px solid #8d8d8d;
  border-left: 1px solid #8d8d8d;
}

.grip {
  display: flex;
  flex-direction: column;
  align-items: center;
  gap: 5px;
  padding-top: 3px;
}

.grip button,
.grip svg {
  width: 8px;
  height: 8px;
}

.dots {
  flex: none;
  width: 4px;
  height: 29px;
  background: radial-gradient(circle at 2px 2px, #6b6b6b 2px, transparent 2px) 0 0 / 4px 5px;
}

.grip .dots {
  margin-top: 5px;
}

.bar {
  height: 27px;
}

.path {
  display: flex;
  position: relative;
  flex: 1;
  align-items: center;
  height: 25px;
  padding: 0 6px 0 2px;
  background: #fff;
}

.path .badge {
  position: absolute;
  left: 2px;
}

.path select {
  flex: 1;
  padding: 0 4px;
  border: 0;
  outline: 0;
  appearance: none;
  background: none;
  font: 12px/16px "Open Sans", "Noto Sans", sans-serif;
}

.panes {
  display: flex;
  align-items: flex-start;
  gap: 8px;
  padding-right: 5px;
}

.tree {
  flex: none;
  width: 179px;
  border: 1px solid #828790;
  background: #fff;
}

.treebody {
  display: flex;
  height: 280px;
}

.tree ul {
  flex: 1;
  overflow: hidden;
  margin: 0;
  padding: 1px 0 0 2px;
  list-style: none;
  font: 12px/18px "Open Sans", "Noto Sans", sans-serif;
}

.tree li {
  display: flex;
  align-items: center;
  height: 18px;
  white-space: nowrap;
}

.guide,
.node {
  position: relative;
  flex: none;
  width: 19px;
  height: 18px;
  background: repeating-linear-gradient(#666 0 1px, transparent 1px 2px) 9px 0 / 1px 18px no-repeat;
}

.guide.hide {
  display: none;
}

.guide.blank {
  background: none;
}

.node {
  display: flex;
  align-items: center;
  padding-left: 5px;
  background:
    repeating-linear-gradient(#666 0 1px, transparent 1px 2px) 9px 0 / 1px 18px no-repeat,
    repeating-linear-gradient(90deg, #666 0 1px, transparent 1px 2px) 9px 9px / 10px 1px no-repeat;
}

.node.last {
  background-size: 1px 9px, 10px 1px;
}

.box {
  width: 9px;
  height: 9px;
}

.ficon {
  position: relative;
  flex: none;
  height: 16px;
  margin-right: 6px;
}

.ficon svg {
  display: block;
}

.ficon .badge {
  position: absolute;
  left: 0;
  top: 0;
}

.vscroll,
.hscroll {
  display: flex;
  flex: none;
  background: #f0f0f0;
}

.vscroll {
  flex-direction: column;
  width: 17px;
}

.vscroll button {
  flex: none;
  height: 18px;
}

.vscroll svg {
  width: 8px;
  height: 4px;
}

.hscroll {
  height: 16px;
}

.hscroll button {
  flex: none;
  width: 18px;
}

.hscroll svg {
  width: 4px;
  height: 8px;
}

.thumb {
  display: flex;
  align-items: center;
  justify-content: center;
  border: 1px solid #979797;
  border-radius: 2px;
  background: linear-gradient(90deg, #f5f5f5, #e0e0e0 50%, #b5b5b5);
}

.thumb i {
  width: 8px;
  height: 8px;
  background: repeating-linear-gradient(#555 0 1px, transparent 1px 3px);
}

.tree .vscroll .thumb {
  height: 138px;
  margin: 58px 1px auto;
}

.hscroll .thumb {
  background: linear-gradient(#f5f5f5, #e0e0e0 50%, #b5b5b5);
}

.hscroll .thumb i {
  background: repeating-linear-gradient(90deg, #555 0 1px, transparent 1px 3px);
}

.tree .hscroll .thumb {
  width: 96px;
  margin-right: 28px;
}

.files {
  flex: 1;
  height: 271px;
  border: 1px solid #828790;
  background: #fff;
}

.tabs {
  display: flex;
  grid-column: 1 / -1;
  height: 19px;
  margin-top: 4px;
  padding: 0 0 2px;
  border-top: 1px solid #8d8d8d;
  background: #b1b1b1;
}

.tabs button {
  margin-right: -8px;
  padding: 0 18px 1px 14px;
  background: #dadada;
  clip-path: polygon(9px 0, 100% 0, calc(100% - 9px) 100%, 1px 100%);
  white-space: nowrap;
}

.tabs .active {
  background: #f0f0f0;
  clip-path: polygon(0 0, 100% 0, calc(100% - 9px) 100%, 8px 100%);
  font-weight: 700;
}

.preview {
  grid-template-columns: 14px minmax(0, 1fr);
  align-content: stretch;
}

.screen {
  display: flex;
  flex-direction: column;
}

.quality {
  flex: none;
  gap: 7px;
  padding: 0 4px 0 1px;
  font: 12px/16px "Open Sans", "Noto Sans", sans-serif;
  white-space: nowrap;
}

.stage {
  display: flex;
  flex: 1;
  align-items: center;
  justify-content: center;
  padding-right: 4px;
}

.video {
  width: 91%;
  aspect-ratio: 327 / 240;
  background: #000;
}

.info {
  display: grid;
  grid-template-columns: 47px 133px 46px auto;
  margin: 0;
  padding-top: 2px;
  border-top: 1px solid #9a9a9a;
  line-height: 13px;
  white-space: nowrap;
}

.info dd {
  margin: 0;
}

.info .red {
  color: #8b0f1c;
}

.timeline {
  display: grid;
  flex: 1;
  grid-template-columns: 254px minmax(0, 1fr);
  min-height: 0;
  margin: 0 3px;
  border-top: 1px solid #8d8d8d;
}

.left,
.right,
.lanes,
.side {
  display: flex;
  flex-direction: column;
  min-width: 0;
}

.clockbar {
  display: flex;
  flex: none;
  align-items: center;
  justify-content: space-between;
  height: 47px;
  padding: 0 9px 0 5px;
}

.clockbar output {
  color: #666;
  font: 21px/24px Roboto, sans-serif;
}

.tracks {
  flex: 1;
  margin-right: 6px;
  border-top: 1px solid #8d8d8d;
  border-left: 1px solid #8d8d8d;
}

.track {
  height: 64px;
  border-right: 1px solid #9d9d9d;
  border-bottom: 1px solid #9d9d9d;
}

.track.sel {
  background: #bad7f5;
}

.top,
.level {
  display: flex;
  align-items: center;
}

.top {
  height: 22px;
  padding: 0 4px 0 3px;
}

.strip {
  flex: none;
  width: 14px;
  height: 17px;
}

.num {
  width: 26px;
  height: 17px;
  margin: 0 3px;
  padding-right: 3px;
  border: 1px solid #6d2b3a;
  border-radius: 2px;
  background: #8c4053;
  color: #fff;
  font-weight: 400;
  line-height: 16px;
  text-align: right;
}

.n3 {
  border-color: #4c8b92;
  background: linear-gradient(#fff, #fff) 1px 1px / 4px 4px no-repeat, #62a4ad;
}

.top input {
  flex: 1;
  min-width: 0;
  height: 17px;
  border: 0;
  border-top: 1px solid #ddd;
  background: #f3f3f3;
}

.top .tool .i16 {
  width: 15px;
  height: 15px;
}

.top .slim {
  width: 16px;
}

.tiny {
  width: 6px;
  height: 4px;
}

.level {
  height: 19px;
  padding: 0 14px 0 22px;
}

.level label {
  width: 24px;
}

.level span {
  width: 51px;
  text-align: right;
}

.level input {
  flex: 1;
  min-width: 0;
  height: 14px;
  margin: 0 0 0 11px;
  appearance: none;
  background: linear-gradient(#888, #888) 0 6px / 100% 1px no-repeat, linear-gradient(#fff, #fff) 0 7px / 100% 1px no-repeat;
}

.level input::-webkit-slider-thumb {
  width: 18px;
  height: 12px;
  appearance: none;
  border: 1px solid #777;
  border-radius: 2px;
  background: repeating-linear-gradient(90deg, #777 0 1px, transparent 1px 3px) 5px 2px / 7px 6px no-repeat, linear-gradient(#fff, #ccc);
}

.rate {
  display: flex;
  flex: none;
  align-items: center;
  height: 45px;
  padding: 0 20px 2px 3px;
}

.rate label {
  width: 83px;
}

.shuttle {
  position: relative;
  flex: 1;
  height: 14px;
}

.shuttle input {
  display: block;
  width: 100%;
  height: 14px;
  margin: 0;
  appearance: none;
  background: linear-gradient(#999, #999) 0 8px / 100% 1px no-repeat;
}

.shuttle input::-webkit-slider-thumb {
  width: 26px;
  height: 12px;
  appearance: none;
}

.knob {
  position: absolute;
  left: calc(50% - 14px);
  top: 3px;
  width: 26px;
  height: 12px;
  pointer-events: none;
}

.mark {
  position: absolute;
  left: calc(50% + 9px);
  top: 15px;
  width: 11px;
  height: 11px;
}

.right {
  border: solid #8d8d8d;
  border-width: 0 0 1px 1px;
}

.body {
  display: flex;
  flex: 1;
  min-height: 0;
}

.lanes {
  flex: 1;
  border-right: 1px solid #aaa;
}

.loopbar {
  position: relative;
  height: 30px;
  padding: 4px 0 0;
  border-bottom: 1px solid #8d8d8d;
}

.line {
  display: flex;
  align-items: center;
  justify-content: flex-end;
  gap: 24px;
  width: 97%;
  height: 3px;
  background: linear-gradient(#418bd4, #418bd4) 0 0 / calc(100% - 5px) 100% no-repeat;
}

.line span {
  flex: none;
  height: 12px;
  padding: 0 3px;
  border: 1px solid #000;
  background: #ffffe1;
  font: 10px/10px Roboto, sans-serif;
}

.line svg {
  width: 6px;
  height: 7px;
}

.flagmark {
  position: absolute;
  left: 0;
  bottom: 0;
  width: 8px;
  height: 7px;
}

.ruler {
  display: flex;
  position: relative;
  overflow: hidden;
  height: 17px;
  border-bottom: 1px solid #8d8d8d;
}

.seg {
  display: flex;
  position: relative;
  flex: 0 0 calc(100% / 5.95);
  justify-content: space-evenly;
  align-items: flex-end;
  border-left: 1px solid #555;
}

.seg span {
  position: absolute;
  left: 2px;
  top: 3px;
  font: 10px/12px Roboto, sans-serif;
}

.seg i {
  width: 1px;
  height: 3px;
  background: #555;
}

.playhead {
  position: absolute;
  left: 0;
  top: 1px;
  width: 7px;
  height: 15px;
}

.canvas {
  position: relative;
  flex: 1;
  background: #c8c8c8;
}

.gridlines {
  display: flex;
  position: absolute;
  z-index: 1;
  overflow: hidden;
  inset: 0;
}

.gridlines i {
  flex: 0 0 calc(100% / 5.95);
  background: repeating-linear-gradient(#222 0 1px, transparent 1px 4px) 0 0 / 1px 100% no-repeat;
}

.gridlines i:first-child {
  background: linear-gradient(#000, #000) 0 0 / 1px 100% no-repeat;
}

.lane {
  height: 64px;
  padding-top: 2px;
  border-bottom: 1px solid #9d9d9d;
  background: #f0f0f0;
}

.clip {
  position: relative;
  z-index: 2;
  height: 60px;
  border: 1px solid #333;
  background: #fff;
}

.clip svg {
  display: block;
  width: 100%;
  height: 58px;
}

.short {
  width: 8.6%;
}

.long {
  width: 97%;
}

.side {
  flex: none;
  align-items: center;
  gap: 2px;
  width: 17px;
  padding-top: 1px;
}

.side .vscroll {
  flex: 1;
  width: 16px;
}

.side .vscroll .thumb {
  height: 86px;
  margin: 28px 1px auto;
}

.mini {
  flex: none;
  width: 15px;
  height: 15px;
  border: 1px solid #9a9a9a;
  background: linear-gradient(#fafafa, #cfcfcf);
}

.mini svg {
  width: 10px;
  height: 10px;
}

.bit {
  flex: none;
  width: 14px;
  height: 4px;
  border: 1px solid #aaa;
  border-width: 0 1px;
}

.zoomrow {
  display: flex;
  flex: none;
  align-items: center;
  gap: 2px;
  height: 17px;
  padding-right: 1px;
}

.zoomrow .bit {
  width: 5px;
  height: 15px;
  border-width: 1px;
  background: #ddd;
}

.zoomrow .hscroll {
  flex: 1;
}

.zoomrow .thumb {
  flex: 1;
  justify-content: space-between;
  padding: 0 2px;
}

.zoomrow .thumb i {
  width: 5px;
}

.transport {
  height: 28px;
  padding: 0 3px;
  border-top: 1px solid #bbb;
}

.times {
  display: flex;
  gap: 3px;
  margin-left: auto;
}

.times output {
  width: 66px;
  height: 17px;
  padding-left: 2px;
  border: 1px solid #a5a5a5;
  border-right-color: #fff;
  border-bottom-color: #fff;
}

.status {
  display: flex;
  flex: none;
  align-items: flex-end;
  justify-content: space-between;
  height: 22px;
  padding: 0 3px 1px;
  line-height: 16px;
}

.rec {
  width: 225px;
  padding-left: 1px;
  border: solid #a0a0a0;
  border-width: 1px 0 0 1px;
}

.taskbar {
  display: flex;
  flex: none;
  align-items: center;
  height: 40px;
  border-top: 1px solid #35516f;
  background: linear-gradient(90deg, #8498b0, #a3bcdc 14%, #a5c0e0 78%, #71879f 86%, #697f96);
}

.start {
  width: 54px;
}

.start svg {
  width: 36px;
  height: 36px;
}

.app-btn {
  width: 59px;
  height: 39px;
  margin-left: 3px;
}

.start + .app-btn {
  margin-left: 5px;
}

.app-btn svg {
  width: 32px;
  height: 32px;
}

.app-btn.open {
  border: 1px solid #44607f;
  border-radius: 3px;
  background: linear-gradient(135deg, #cad8e8, #a6bcd6);
  box-shadow: inset 0 0 0 1px #dbe6f2;
}

.app-btn.now {
  background: linear-gradient(135deg, #f0f4f9, #c0d1e4);
}

.tray {
  display: flex;
  align-items: center;
  gap: 6px;
  margin-left: auto;
}

.tray svg {
  width: 18px;
  height: 16px;
}

.tray .chev {
  width: 8px;
  height: 5px;
  margin-right: 6px;
}

.clock {
  display: flex;
  flex-direction: column;
  align-items: center;
  width: 76px;
  color: #fff;
  line-height: 17px;
}

.peek {
  width: 15px;
  height: 39px;
  border: 1px solid #3f5267;
  background: linear-gradient(135deg, #8c9daf, #4e6174);
}
</style>
